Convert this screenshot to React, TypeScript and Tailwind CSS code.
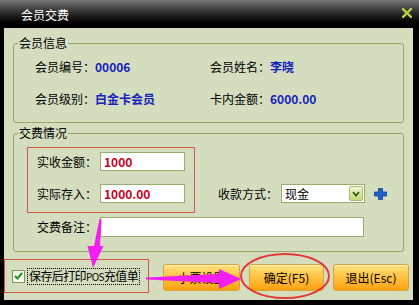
import React from "react"

function Field({ label, value }: { label: string; value: string }) {
  return (
    <div className="flex items-center h-[16px]">
      <span className="text-black">{label}：</span>
      <span className="font-bold text-[#1424bc]">{value}</span>
    </div>
  )
}

function OrangeButton({ children, w }: { children: React.ReactNode; w: string }) {
  return (
    <button
      className={`${w} h-[27px] rounded-[3px] border border-[#d9a23a] bg-gradient-to-b from-[#ffe17c] via-[#ffc13e] to-[#ffa106] text-black text-[12px] leading-none shadow-[inset_0_1px_0_#fff3c0]`}
    >
      {children}
    </button>
  )
}

export default function App() {
  return (
    <div className="relative w-[419px] h-[305px] flex flex-col bg-black overflow-hidden text-[12px] leading-[16px] font-['SimSun','Noto_Sans_CJK_SC',sans-serif]">
      {/* title bar */}
      <div className="h-[28px] shrink-0 flex items-center justify-between pl-[21px] pr-[7px] bg-gradient-to-b from-[#767676] via-[#262626] to-black">
        <span className="text-white pt-[2px]">会员交费</span>
        <svg width="10" height="10" viewBox="0 0 10 10" className="mb-[2px]">
          <path d="M1 1L9 9M9 1L1 9" stroke="#b6d43e" strokeWidth="2.4" strokeLinecap="square" />
        </svg>
      </div>

      {/* body */}
      <div className="flex-1 ml-[4px] mr-[6px] mb-[5px] bg-[#d4ddbd] flex flex-col">
        <fieldset className="ml-[9px] mt-[7px] w-[391px] border border-[#95a66a] rounded-[3px] pt-[8px] pb-[15px]">
          <legend className="ml-[4px] px-[1px] text-black">会员信息</legend>
          <div className="pl-[21px] grid grid-cols-[175px_1fr] gap-y-[16px]">
            <Field label="会员编号" value="00006" />
            <Field label="会员姓名" value="李晓" />
            <Field label="会员级别" value="白金卡会员" />
            <Field label="卡内金额" value="6000.00" />
          </div>
        </fieldset>

        <fieldset className="ml-[9px] mt-[2px] w-[391px] border border-[#95a66a] rounded-[3px] pt-[6px] pb-[14px]">
          <legend className="ml-[4px] px-[1px] text-black">交费情况</legend>
          <div className="flex items-end">
            <div className="ml-[13px] w-[168px] border border-[#d9564a] pl-[9px] pt-[4px] pb-[9px] flex flex-col gap-[13px]">
              <div className="flex items-center gap-[3px]">
                <span className="w-[60px]">实收金额：</span>
                <div className="w-[85px] h-[19px] border border-[#9aab70] bg-white pl-[3px] flex items-center font-bold text-[#c8001e]">1000</div>
              </div>
              <div className="flex items-center gap-[3px]">
                <span className="w-[60px]">实际存入：</span>
                <div className="w-[85px] h-[19px] border border-[#9aab70] bg-white pl-[3px] flex items-center font-bold text-[#c8001e]">1000.00</div>
              </div>
            </div>
            <div className="ml-[23px] mb-[10px] flex items-center">
              <span className="w-[60px]">收款方式：</span>
              <div className="ml-[3px] w-[84px] h-[19px] border border-[#9aab70] bg-white flex items-center justify-between pl-[3px] pr-[1px]">
                <span>现金</span>
                <div className="w-[14px] h-[15px] border border-[#a9bb6c] rounded-[2px] bg-gradient-to-b from-[#f2f7cf] to-[#c5d87a] flex items-center justify-center">
                  <svg width="8" height="6" viewBox="0 0 8 6">
                    <path d="M1 1L4 4.5L7 1" stroke="#2f5a14" strokeWidth="1.8" fill="none" />
                  </svg>
                </div>
              </div>
              <svg width="13" height="12" viewBox="0 0 13 12" className="ml-[9px]">
                <path d="M4.5 0.5H8.5V4H12.5V8H8.5V11.5H4.5V8H0.5V4H4.5Z" fill="#1f62cc" stroke="#123f94" strokeWidth="0.8" />
              </svg>
            </div>
          </div>
          <div className="ml-[23px] mt-[4px] flex items-center gap-[3px]">
            <span className="w-[60px]">交费备注：</span>
            <div className="w-[264px] h-[20px] border border-[#9aab70] bg-white" />
          </div>
        </fieldset>

        <div className="mt-[7px] flex items-start">
          <div className="w-[145px] h-[34px] shrink-0 border border-[#d9564a] pl-[7px] flex items-center">
            <div className="w-[13px] h-[13px] shrink-0 border border-[#7f9656] bg-gradient-to-br from-[#e8f0d8] to-white flex items-center justify-center">
              <svg width="9" height="8" viewBox="0 0 9 8">
                <path d="M1 4L3.5 6.5L8 1" stroke="#21901f" strokeWidth="2" fill="none" />
              </svg>
            </div>
            <span className="ml-[2px] px-[1px] border border-dotted border-black leading-[14px] whitespace-nowrap tracking-[-0.6px]">
              保存后打印<span className="text-[10px]">POS</span>充值单
            </span>
          </div>
          <div className="ml-[14px] mt-[5px] flex gap-[9px]">
            <OrangeButton w="w-[77px]">小票设置</OrangeButton>
            <OrangeButton w="w-[75px]">确定(F5)</OrangeButton>
            <OrangeButton w="w-[76px]">退出(Esc)</OrangeButton>
          </div>
        </div>
      </div>

      {/* annotations drawn over the dialog */}
      <svg className="absolute inset-0 pointer-events-none" width="419" height="305" viewBox="0 0 419 305">
        <polygon points="99.5,219 101.5,219 100,246 103.5,246 93,268 87.5,246 94,246" fill="#f21ef2" />
        <polygon points="146,277.5 219,274 219,269 241,279 219,289 219,283 146,279.5" fill="#f21ef2" />
        <ellipse cx="285" cy="276" rx="44" ry="22" fill="none" stroke="#e23a3a" strokeWidth="2" />
      </svg>
    </div>
  )
}
